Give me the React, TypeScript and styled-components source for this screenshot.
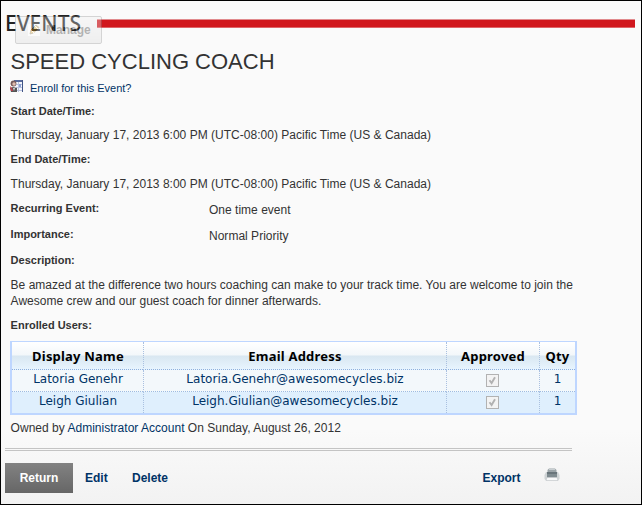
import React from 'react';
import styled, { createGlobalStyle } from 'styled-components';

const Global = createGlobalStyle`
  * { box-sizing: border-box; }
  html, body { margin: 0; padding: 0; }
  body { font-family: "Liberation Sans", Arial, sans-serif; color: #333; }
`;

const Page = styled.main`
  width: 642px;
  height: 505px;
  overflow: hidden;
  border: 1px solid #000;
  padding: 0 6px 0 4px;
  background: linear-gradient(#fafafa 0, #fafafa 430px, #f2f2f2 503px);
`;

const ModuleHeader = styled.header`
  position: relative;
  height: 48px;
  padding-top: 18px;
  display: flex;
`;

const ModuleTitle = styled.div`
  position: relative;
  z-index: 1;
  width: 92px;
  height: 8px;
  font: 500 22px/8px "Noto Sans", sans-serif;
  color: #222;
  white-space: nowrap;

  span {
    display: inline-block;
    transform: translateY(-1px) scaleX(0.955);
    transform-origin: 0 50%;
  }
`;

const RedRule = styled.div`
  flex: 1;
  height: 9px;
  background: #d1171d;
  border-top: 1px solid #e18a8d;
  border-bottom: 1px solid #df6468;
`;

const ManageButton = styled.div`
  position: absolute;
  z-index: 2;
  left: 10px;
  top: 15px;
  width: 87px;
  height: 28px;
  display: flex;
  align-items: center;
  gap: 5px;
  padding-left: 11px;
  border: 1px solid #888;
  border-radius: 2px;
  background: linear-gradient(#f0f0f0, #d8d8d8);
  color: #222;
  font-size: 12px;
  font-weight: bold;
  opacity: 0.33;
`;

const Title = styled.h1`
  margin: 0 0 0 5.5px;
  height: 29px;
  font-size: 22px;
  font-weight: normal;
  line-height: 26px;
  white-space: nowrap;
`;

const EnrollLink = styled.div`
  display: flex;
  align-items: center;
  gap: 6px;
  height: 16px;
  margin: 2px 0 7px 5px;
  color: #003366;
  font-size: 11px;
  line-height: 16px;

  svg { margin-top: -4px; }
`;

const Details = styled.section`
  padding-left: 5px;
  display: flex;
  flex-direction: column;
`;

const Label = styled.div<{ $after?: number }>`
  height: 16px;
  margin-bottom: ${(p) => p.$after ?? 8}px;
  padding-left: 0.6px;
  font-size: 11px;
  font-weight: bold;
  line-height: 16px;
`;

const Value = styled.div<{ $after?: number }>`
  margin-bottom: ${(p) => p.$after ?? 8}px;
  padding-left: 0.6px;
  font-size: 12px;
  line-height: 16px;
  letter-spacing: 0.016px;
  white-space: nowrap;
`;

const FieldRow = styled.div`
  display: grid;
  grid-template-columns: 198px 1fr;
  height: 26px;

  ${Value} { padding: 2px 0 0 1px; }
`;

const Table = styled.table`
  width: 567px;
  height: 74px;
  table-layout: fixed;
  border-collapse: separate;
  border-spacing: 0;
  border: 2px solid #bed6ff;
  border-top-width: 1px;
  font-family: "DejaVu Sans", Verdana, sans-serif;
  font-size: 12px;
  line-height: 14px;
  text-align: center;
  white-space: nowrap;
`;

const NameColumn = styled.col`
  width: 131px;
`;

const EmailColumn = styled.col`
  width: 303px;
`;

const QtyColumn = styled.col`
  width: 36px;
`;

const HeadCell = styled.th`
  height: 28px;
  padding: 0;
  border-bottom: 1px dotted #8fb0dd;
  font: bold 13px/14px "Noto Sans", sans-serif;
  letter-spacing: 0.2px;
  color: #000;

  & + & { border-left: 1px dotted #a9c0e0; }
  &:first-child { padding-left: 1px; }
`;

const HeadRow = styled.tr`
  background: linear-gradient(#fff 0, #f3f7fa 13px, #d9e7f1 14px, #e7f4fe 27px);
`;

const BodyRow = styled.tr<{ $alt?: boolean }>`
  background: ${(p) => (p.$alt ? '#dfeffd' : '#f3f8fb')};
`;

const Cell = styled.td<{ $last?: boolean }>`
  height: ${(p) => (p.$last ? 21 : 22)}px;
  padding: 0 0 3px;
  border-bottom: ${(p) => (p.$last ? '0' : '1px dotted #9dbbe2')};
  color: #003366;

  & + & { border-left: 1px dotted #a9c0e0; }
  &:first-child { padding-left: 1px; }
`;

const CheckBox = styled.span`
  display: block;
  width: 13px;
  height: 13px;
  margin: 3px auto 0;
  position: relative;
  left: -1px;
  border: 1px solid #b2b2b2;
  background: #f3f3f3;
  svg { display: block; }
`;

const Owned = styled(Value)`
  height: 16px;
  margin: 5px 0 12px;
`;

const AccountName = styled.span`
  color: #003366;
`;

const Divider = styled.div`
  width: 567px;
  height: 3px;
  border-top: 1px solid #c4c4c4;
  border-bottom: 1px solid #c4c4c4;
`;

const Actions = styled.footer`
  display: flex;
  align-items: center;
  width: 555px;
  height: 30px;
  margin-top: 12px;
  color: #003366;
  font-size: 12px;
  font-weight: bold;

  svg { margin-top: -6px; }
`;

const ReturnButton = styled.div`
  width: 68px;
  height: 30px;
  margin-right: 12px;
  line-height: 30px;
  text-align: center;
  color: #fff;
  background: linear-gradient(#828282, #666);
`;

const ActionLink = styled.div<{ $width: number }>`
  width: ${(p) => p.$width}px;
  line-height: 30px;
`;

const Spacer = styled.div`
  flex: 1;
`;

const PencilIcon = () => (
  <svg width="14" height="14" viewBox="0 0 14 14">
    <path d="M1 1h12v12H1z" fill="#fff" />
    <path d="M3 11l1-4 5-5 3 2.5-5.5 5.5z" fill="#dc9a10" stroke="#65532a" strokeWidth=".8" />
    <path d="M8 3l3 3M4 7l3 3" stroke="#fff" />
  </svg>
);

const EnrollIcon = () => (
  <svg width="14" height="14" viewBox="0 0 14 14">
    <path d="M4 1h9v11H4z" fill="#f4f6fc" />
    <path d="M4 1h9v2H4z" fill="#586a9c" />
    <path d="M12 1h1v12h-1z" fill="#405585" />
    <path d="M6 5.5h6M6 8.5h6M6 11.5h6M8.5 3v10" stroke="#b8c1df" />
    <path d="M9 5h2v3H9z" fill="#8b9fd0" />
    <circle cx="3.500" cy="4.500" r="2.900" fill="#765a5a" />
    <circle cx="4" cy="5" r="1.700" fill="#e0bcae" />
    <path d="M0 9l3-1 4 1v4H1z" fill="#555" />
    <path d="M0 7l2 2 1 3H1z" fill="#bd3c48" />
    <path d="M3 9h2l-1 3z" fill="#ddd" />
  </svg>
);

const PrinterIcon = () => (
  <svg width="16" height="14" viewBox="0 0 16 14">
    <path d="M3.5 5V2L5 .5h6L12.5 2v3z" fill="#9ca5a9" />
    <path d="M5 1h6v1H5z" fill="#c9cfd2" />
    <path d="M2 4h12l1.5 3v4L14 12.5H2L.5 11V7z" fill="#cfd4d6" />
    <path d="M3 4h10v2H3z" fill="#69757b" />
    <path d="M3 6h10v3.500H3z" fill="#7f8b90" />
    <path d="M3 9.500h10l1 3H2z" fill="#f8f9fa" stroke="#b8bdc0" strokeWidth=".5" />
  </svg>
);

const DisabledCheck = () => (
  <CheckBox>
    <svg width="11" height="11" viewBox="0 0 11 11">
      <path d="M2.5 5.2L4.6 8L8 2.3" fill="none" stroke="#b1b1b1" strokeWidth="1.9" />
    </svg>
  </CheckBox>
);

const users = [
  { name: 'Latoria Genehr', email: 'Latoria.Genehr@awesomecycles.biz', qty: 1 },
  { name: 'Leigh Giulian', email: 'Leigh.Giulian@awesomecycles.biz', qty: 1 },
];

export default function App() {
  return (
    <>
      <Global />
      <Page>
        <ModuleHeader>
          <ModuleTitle><span>EVENTS</span></ModuleTitle>
          <RedRule />
          <ManageButton><PencilIcon />Manage</ManageButton>
        </ModuleHeader>
        <Title>SPEED CYCLING COACH</Title>
        <EnrollLink><EnrollIcon />Enroll for this Event?</EnrollLink>
        <Details>
          <Label>Start Date/Time:</Label>
          <Value>Thursday, January 17, 2013 6:00 PM (UTC-08:00) Pacific Time (US &amp; Canada)</Value>
          <Label $after={9}>End Date/Time:</Label>
          <Value>Thursday, January 17, 2013 8:00 PM (UTC-08:00) Pacific Time (US &amp; Canada)</Value>
          <FieldRow><Label>Recurring Event:</Label><Value>One time event</Value></FieldRow>
          <FieldRow><Label>Importance:</Label><Value>Normal Priority</Value></FieldRow>
          <Label $after={9}>Description:</Label>
          <Value>
            Be amazed at the difference two hours coaching can make to your track time. You are welcome to join the<br />
            Awesome crew and our guest coach for dinner afterwards.
          </Value>
          <Label>Enrolled Users:</Label>
          <Table>
            <colgroup>
              <NameColumn />
              <EmailColumn />
              <col />
              <QtyColumn />
            </colgroup>
            <thead>
              <HeadRow>
                <HeadCell>Display Name</HeadCell>
                <HeadCell>Email Address</HeadCell>
                <HeadCell>Approved</HeadCell>
                <HeadCell>Qty</HeadCell>
              </HeadRow>
            </thead>
            <tbody>
              {users.map((u, i) => {
                const last = i === users.length - 1;
                return (
                  <BodyRow key={u.name} $alt={i % 2 === 1}>
                    <Cell $last={last}>{u.name}</Cell>
                    <Cell $last={last}>{u.email}</Cell>
                    <Cell $last={last}><DisabledCheck /></Cell>
                    <Cell $last={last}>{u.qty}</Cell>
                  </BodyRow>
                );
              })}
            </tbody>
          </Table>
          <Owned>Owned by <AccountName>Administrator Account</AccountName> On Sunday, August 26, 2012</Owned>
        </Details>
        <Divider />
        <Actions>
          <ReturnButton>Return</ReturnButton>
          <ActionLink $width={47}>Edit</ActionLink>
          <ActionLink $width={60}>Delete</ActionLink>
          <Spacer />
          <ActionLink $width={61.5}>Export</ActionLink>
          <PrinterIcon />
        </Actions>
      </Page>
    </>
  );
}
